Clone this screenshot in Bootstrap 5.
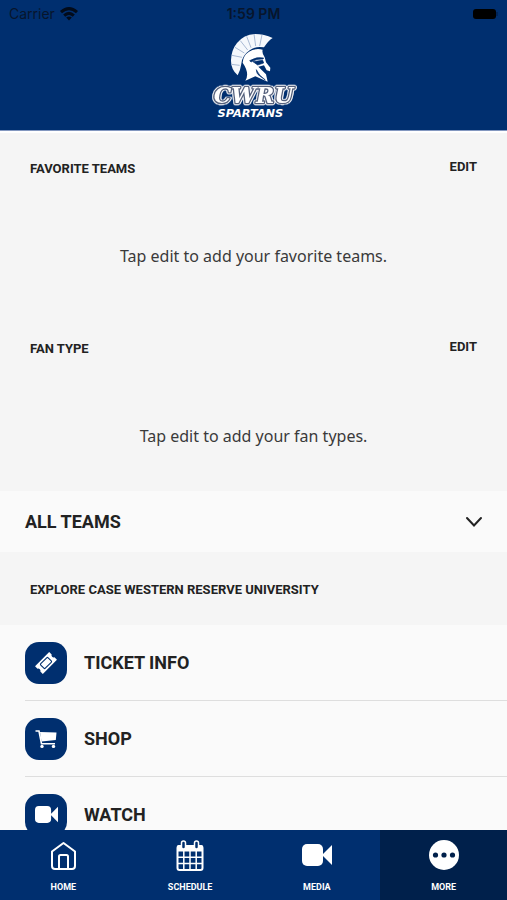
<!DOCTYPE html>
<html lang="en">
<head>
<meta charset="utf-8">
<meta name="viewport" content="width=device-width, initial-scale=1">
<title>CWRU Spartans</title>
<link href="https://cdn.jsdelivr.net/npm/bootstrap@5.3.0/dist/css/bootstrap.min.css" rel="stylesheet">
<style>
  :root { --navy: #002f6f; --navy-dark: #00204b; --ink: #222; }
  body { font-family: Roboto, "Liberation Sans", sans-serif; color: var(--ink); background: #f5f5f5; }
  .app-header { background: var(--navy); border-bottom: 1px solid #8397bf; box-shadow: 0 2px 0 #fff; z-index: 1; }
  .status-bar { height: 27px; padding: 0 9px; font-family: Inter, sans-serif; font-size: 14px; color: #07152c; }
  .status-bar > * { flex: 1 1 0; }
  .status-time { font-weight: 600; }
  .brand-logo { height: 103px; padding-top: 3px; }
  .wordmark { paint-order: stroke; filter: drop-shadow(1px 0 0 #fff) drop-shadow(-1px 0 0 #fff) drop-shadow(0 1px 0 #fff) drop-shadow(0 -1px 0 #fff); }
  .app-scroll { min-height: 0; overflow-y: auto; scrollbar-width: none; }
  .app-scroll::-webkit-scrollbar { display: none; }
  .pref-block { height: 180px; padding: 22px 30px 0; }
  .section-title { font-size: 13px; line-height: 24px; font-weight: 700; }
  .edit-btn { font-size: 13px; line-height: 20px; font-weight: 700; color: var(--ink); }
  .pref-empty { font-family: "Noto Sans", sans-serif; font-size: 16px; line-height: 24px; padding-top: 63px; color: #3a3a3a; }
  .row-title { font-size: 18px; line-height: 24px; font-weight: 700; color: var(--ink); }
  .all-teams { height: 61px; padding: 0 23px 0 25px; background: #fafafa; }
  .explore-head { height: 73px; padding: 2px 30px 0; }
  .link-list { background: #fafafa; padding-left: 25px; }
  .link-row { height: 76px; gap: 17px; border-bottom: 1px solid #dedede; }
  .tile { width: 42px; height: 42px; border-radius: 14px; background: var(--navy); }
  .tab-bar { background: var(--navy); }
  .tab-item { height: 70px; padding-top: 8px; gap: 3px; font-size: 9px; line-height: 24px; font-weight: 700; color: #fff; }
  .tab-item.active { background: var(--navy-dark); }
</style>
<script src="https://cdn.jsdelivr.net/npm/bootstrap@5.3.0/dist/js/bootstrap.bundle.min.js"></script>
</head>
<body>
<div class="d-flex flex-column vh-100">
  <header class="app-header position-relative">
    <div class="status-bar d-flex align-items-center">
      <div class="d-flex align-items-center gap-1">
        <span>Carrier</span>
        <svg width="20" height="16" viewBox="0 0 20 16" fill="none" stroke="#020b1a" stroke-width="3" aria-hidden="true"><path d="M2 6.2Q10-1 18 6.2M5.2 9.6Q10 5.2 14.8 9.6"/><path d="M7.2 11.5Q10 9.6 12.8 11.5L10 14.6Z" fill="#020b1a" stroke="none"/></svg>
      </div>
      <div class="status-time text-center">1:59 PM</div>
      <div class="d-flex justify-content-end"><svg width="26" height="12" viewBox="0 0 26 12" aria-hidden="true"><rect x="1" y="1" width="23" height="10" rx="3" fill="#000"/><path d="M25 4v4" stroke="#001b42"/></svg></div>
    </div>
    <div class="brand-logo text-center">
      <svg width="90" height="90" viewBox="26 15 270 270" role="img" aria-label="CWRU Spartans">
        <path d="M112 151Q91 133 92 105Q93 75 110 54Q130 29 164 27Q192 27 217 39Q204 47 191 67Q166 62 148 76Q126 91 123 116Q121 133 112 151Z" fill="#f5f8fc"/>
        <path d="M93 118l25 3M95 91l30 6M104 67l28 17M120 47l22 28M139 34l13 34M161 27l5 36M185 29l-7 34" stroke="#a9bad4" stroke-width="3"/>
        <path d="M127 113Q128 91 146 80Q166 68 187 74Q184 84 193 97L197 112L210 128L209 139L199 136L191 121L174 125L197 148L202 170L165 154L135 167Q149 145 127 113Z" fill="#fff"/>
        <path d="M148 107Q170 94 190 99L188 102Q168 101 152 111ZM158 110L187 106L190 114L172 120ZM168 134Q174 150 195 165L178 153Q168 146 168 134Z" fill="#002f6f" stroke="#002f6f" stroke-width="2"/>
        <text class="wordmark" x="160" y="233" text-anchor="middle" font-family="DejaVu Serif, serif" font-weight="700" font-style="italic" font-size="66" fill="#fff" stroke="#56627d" stroke-width="8" stroke-linejoin="round">CWRU</text>
        <text x="150" y="275" text-anchor="middle" font-family="DejaVu Sans, sans-serif" font-weight="700" font-style="italic" font-size="34" fill="#fff">SPARTANS</text>
      </svg>
    </div>
  </header>

  <main class="app-scroll flex-grow-1">
    <section class="pref-block">
      <div class="d-flex justify-content-between align-items-start">
        <h2 class="section-title mb-0 pt-1">FAVORITE TEAMS</h2>
        <button type="button" class="edit-btn btn p-0 border-0 pt-1" aria-label="EDIT favorite teams">EDIT</button>
      </div>
      <p class="pref-empty text-center mb-0">Tap edit to add your favorite teams.</p>
    </section>
    <section class="pref-block">
      <div class="d-flex justify-content-between align-items-start">
        <h2 class="section-title mb-0 pt-1">FAN TYPE</h2>
        <button type="button" class="edit-btn btn p-0 border-0 pt-1" aria-label="EDIT fan type">EDIT</button>
      </div>
      <p class="pref-empty text-center mb-0">Tap edit to add your fan types.</p>
    </section>

    <button type="button" class="all-teams w-100 border-0 d-flex align-items-center justify-content-between" aria-expanded="false">
      <span class="row-title">ALL TEAMS</span>
      <svg width="20" height="12" viewBox="0 0 20 12" fill="none" stroke="#222" stroke-width="2" stroke-linecap="round" aria-hidden="true"><path d="M3 2l7 7.500L17 2"/></svg>
    </button>

    <div class="explore-head d-flex align-items-center"><h2 class="section-title mb-0">EXPLORE CASE WESTERN RESERVE UNIVERSITY</h2></div>

    <nav class="link-list" aria-label="Explore">
      <a href="#tickets" class="link-row d-flex align-items-center text-decoration-none">
        <span class="tile d-flex align-items-center justify-content-center">
          <svg width="24" height="24" viewBox="0 0 24 24" aria-hidden="true"><g transform="rotate(-45 12 12)"><path d="M2 6.500H22V10A2.200 2.200 0 0 0 22 14V17.500H2V14A2.200 2.200 0 0 0 2 10Z" fill="#fff"/><rect x="6.800" y="8.800" width="10.400" height="6.400" rx="1" fill="none" stroke="#002f6f" stroke-width="1.100"/></g></svg>
        </span>
        <span class="row-title">TICKET INFO</span>
      </a>
      <a href="#shop" class="link-row d-flex align-items-center text-decoration-none">
        <span class="tile d-flex align-items-center justify-content-center">
          <svg width="22" height="20" viewBox="0 0 22 20" aria-hidden="true"><path d="M5 3L21.500 3.500L20.800 11L6.500 12.500Z" fill="#fff"/><path d="M.5 2H4L6.500 14.800H20" fill="none" stroke="#fff" stroke-width="1.600"/><circle cx="7" cy="17.400" r="1.700" fill="#fff"/><circle cx="18.500" cy="17.400" r="1.700" fill="#fff"/></svg>
        </span>
        <span class="row-title">SHOP</span>
      </a>
      <a href="#watch" class="link-row d-flex align-items-center text-decoration-none">
        <span class="tile d-flex align-items-center justify-content-center">
          <svg width="23" height="17" viewBox="0 0 30 22" fill="#fff" aria-hidden="true"><rect width="21" height="22" rx="5"/><path d="M20 11L30 1V21Z"/></svg>
        </span>
        <span class="row-title">WATCH</span>
      </a>
    </nav>
  </main>

  <nav class="tab-bar row g-0 flex-shrink-0" aria-label="Main">
    <a href="#home" class="tab-item col d-flex flex-column align-items-center text-decoration-none">
      <svg width="30" height="34" viewBox="0 0 30 34" fill="none" stroke="#fff" stroke-width="2" stroke-linejoin="round" aria-hidden="true"><path d="M15.500 5L27 13.500V28Q27 31 24 31H7Q4 31 4 28V13.500Z"/><path d="M11 31V18.500Q11 17 12.500 17H18.500Q20 17 20 18.500V31"/></svg>
      <span>HOME</span>
    </a>
    <a href="#schedule" class="tab-item col d-flex flex-column align-items-center text-decoration-none">
      <svg width="30" height="34" viewBox="0 0 30 34" fill="none" stroke="#fff" aria-hidden="true"><rect x="2.500" y="8" width="25" height="24" rx="2" stroke-width="2"/><path d="M2 8.500Q2 7 4 7H26Q28 7 28 8.500V13.500H2Z" fill="#fff" stroke="none"/><path d="M8.800 13V31M15 13V31M21.200 13V31M3 19.200H27M3 25.400H27" stroke-width="1.500"/><rect x="6.500" y="3" width="4" height="8" rx="2" fill="#002f6f" stroke-width="1.500"/><rect x="19.500" y="3" width="4" height="8" rx="2" fill="#002f6f" stroke-width="1.500"/></svg>
      <span>SCHEDULE</span>
    </a>
    <a href="#media" class="tab-item col d-flex flex-column align-items-center text-decoration-none">
      <svg width="30" height="34" viewBox="0 0 30 34" fill="#fff" aria-hidden="true"><rect y="6" width="21" height="22" rx="5"/><path d="M20 17L30 7V27Z"/></svg>
      <span>MEDIA</span>
    </a>
    <a href="#more" class="tab-item active col d-flex flex-column align-items-center text-decoration-none" aria-current="page">
      <svg width="30" height="34" viewBox="0 0 30 34" aria-hidden="true"><circle cx="15" cy="17" r="15" fill="#fff"/><g fill="#00204b"><circle cx="6.500" cy="17" r="2.600"/><circle cx="15" cy="17" r="2.600"/><circle cx="23.500" cy="17" r="2.600"/></g></svg>
      <span>MORE</span>
    </a>
  </nav>
</div>
</body>
</html>
